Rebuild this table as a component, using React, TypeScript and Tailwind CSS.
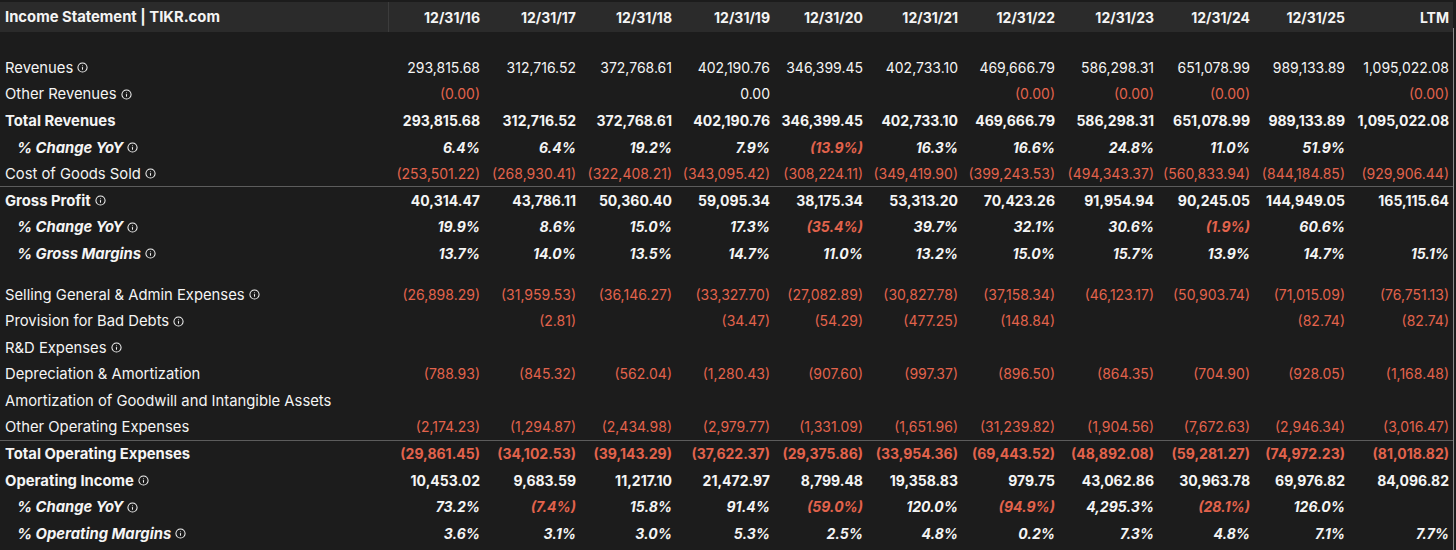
import React from 'react';
import { Info } from 'lucide-react';

type Kind = 'plain' | 'bold' | 'pct';

interface Row {
  label: string;
  kind: Kind;
  info?: boolean;
  values: string[];
  divider?: boolean;
  gapBefore?: boolean;
}

const columns = ['12/31/16', '12/31/17', '12/31/18', '12/31/19', '12/31/20', '12/31/21', '12/31/22', '12/31/23', '12/31/24', '12/31/25', 'LTM'];
const colWidths = ['w-[96px]', 'w-[96px]', 'w-[96px]', 'w-[98px]', 'w-[93px]', 'w-[95px]', 'w-[97px]', 'w-[99px]', 'w-[96px]', 'w-[95px]', 'w-[104px]'];

const revenues = ['293,815.68', '312,716.52', '372,768.61', '402,190.76', '346,399.45', '402,733.10', '469,666.79', '586,298.31', '651,078.99', '989,133.89', '1,095,022.08'];

const rows: Row[] = [
  { label: 'Revenues', kind: 'plain', info: true, values: revenues },
  { label: 'Other Revenues', kind: 'plain', info: true, values: ['(0.00)', '', '', '0.00', '', '', '(0.00)', '(0.00)', '(0.00)', '', '(0.00)'] },
  { label: 'Total Revenues', kind: 'bold', values: revenues },
  { label: '% Change YoY', kind: 'pct', info: true, values: ['6.4%', '6.4%', '19.2%', '7.9%', '(13.9%)', '16.3%', '16.6%', '24.8%', '11.0%', '51.9%', ''] },
  { label: 'Cost of Goods Sold', kind: 'plain', info: true, divider: true, values: ['(253,501.22)', '(268,930.41)', '(322,408.21)', '(343,095.42)', '(308,224.11)', '(349,419.90)', '(399,243.53)', '(494,343.37)', '(560,833.94)', '(844,184.85)', '(929,906.44)'] },
  { label: 'Gross Profit', kind: 'bold', info: true, values: ['40,314.47', '43,786.11', '50,360.40', '59,095.34', '38,175.34', '53,313.20', '70,423.26', '91,954.94', '90,245.05', '144,949.05', '165,115.64'] },
  { label: '% Change YoY', kind: 'pct', info: true, values: ['19.9%', '8.6%', '15.0%', '17.3%', '(35.4%)', '39.7%', '32.1%', '30.6%', '(1.9%)', '60.6%', ''] },
  { label: '% Gross Margins', kind: 'pct', info: true, values: ['13.7%', '14.0%', '13.5%', '14.7%', '11.0%', '13.2%', '15.0%', '15.7%', '13.9%', '14.7%', '15.1%'] },
  { label: 'Selling General & Admin Expenses', kind: 'plain', info: true, gapBefore: true, values: ['(26,898.29)', '(31,959.53)', '(36,146.27)', '(33,327.70)', '(27,082.89)', '(30,827.78)', '(37,158.34)', '(46,123.17)', '(50,903.74)', '(71,015.09)', '(76,751.13)'] },
  { label: 'Provision for Bad Debts', kind: 'plain', info: true, values: ['', '(2.81)', '', '(34.47)', '(54.29)', '(477.25)', '(148.84)', '', '', '(82.74)', '(82.74)'] },
  { label: 'R&D Expenses', kind: 'plain', info: true, values: ['', '', '', '', '', '', '', '', '', '', ''] },
  { label: 'Depreciation & Amortization', kind: 'plain', values: ['(788.93)', '(845.32)', '(562.04)', '(1,280.43)', '(907.60)', '(997.37)', '(896.50)', '(864.35)', '(704.90)', '(928.05)', '(1,168.48)'] },
  { label: 'Amortization of Goodwill and Intangible Assets', kind: 'plain', values: ['', '', '', '', '', '', '', '', '', '', ''] },
  { label: 'Other Operating Expenses', kind: 'plain', divider: true, values: ['(2,174.23)', '(1,294.87)', '(2,434.98)', '(2,979.77)', '(1,331.09)', '(1,651.96)', '(31,239.82)', '(1,904.56)', '(7,672.63)', '(2,946.34)', '(3,016.47)'] },
  { label: 'Total Operating Expenses', kind: 'bold', values: ['(29,861.45)', '(34,102.53)', '(39,143.29)', '(37,622.37)', '(29,375.86)', '(33,954.36)', '(69,443.52)', '(48,892.08)', '(59,281.27)', '(74,972.23)', '(81,018.82)'] },
  { label: 'Operating Income', kind: 'bold', info: true, values: ['10,453.02', '9,683.59', '11,217.10', '21,472.97', '8,799.48', '19,358.83', '979.75', '43,062.86', '30,963.78', '69,976.82', '84,096.82'] },
  { label: '% Change YoY', kind: 'pct', info: true, values: ['73.2%', '(7.4%)', '15.8%', '91.4%', '(59.0%)', '120.0%', '(94.9%)', '4,295.3%', '(28.1%)', '126.0%', ''] },
  { label: '% Operating Margins', kind: 'pct', info: true, values: ['3.6%', '3.1%', '3.0%', '5.3%', '2.5%', '4.8%', '0.2%', '7.3%', '4.8%', '7.1%', '7.7%'] },
];

const kindText: Record<Kind, string> = {
  plain: 'font-normal',
  bold: 'font-bold',
  pct: 'font-bold italic',
};

export default function App() {
  return (
    <div className="w-[1456px] h-[550px] overflow-hidden bg-[#1c1c1c] pt-[2px] text-[#f4f4f4] font-['Inter',sans-serif] text-[14px] relative">
      <table className="border-collapse w-[1453px] table-fixed">
        <thead>
          <tr className="h-[30px] bg-[#2b2b2b]">
            <th className="w-[388px] pl-[5px] text-left text-[14.8px] font-bold border-r border-[#3c3c3c]">Income Statement | TIKR.com</th>
            {columns.map((c, i) => (
              <th key={c} className={`${colWidths[i]} pr-[4px] text-right font-bold`}>{c}</th>
            ))}
          </tr>
        </thead>
        <tbody>
          <tr className="h-[22px]"><td colSpan={12} /></tr>
          {rows.map((row, ri) => (
            <React.Fragment key={ri}>
              {row.gapBefore && <tr className="h-[14px]"><td colSpan={12} /></tr>}
              <tr className={`h-[26.6px] ${row.divider ? 'border-b border-[#5c5c5c]' : ''}`}>
                <td className={`whitespace-nowrap text-[14.8px] leading-[20px] pt-[1px] ${row.kind === 'pct' ? 'pl-[17px]' : 'pl-[5px]'} ${kindText[row.kind]}`}>
                  <span>{row.label}</span>
                  {row.info && (
                    <Info size={11} strokeWidth={2.2} className="inline-block ml-[4px] mb-[2px] align-middle" />
                  )}
                </td>
                {row.values.map((v, vi) => (
                  <td
                    key={vi}
                    className={`pr-[4px] text-right whitespace-nowrap ${kindText[row.kind]} ${v.startsWith('(') ? 'text-[#e2634c]' : ''}`}
                  >
                    {v}
                  </td>
                ))}
              </tr>
            </React.Fragment>
          ))}
        </tbody>
      </table>
      <div className="absolute top-[28px] right-[2px] w-[1px] h-[522px] bg-[#8a8a8a]" />
    </div>
  );
}
